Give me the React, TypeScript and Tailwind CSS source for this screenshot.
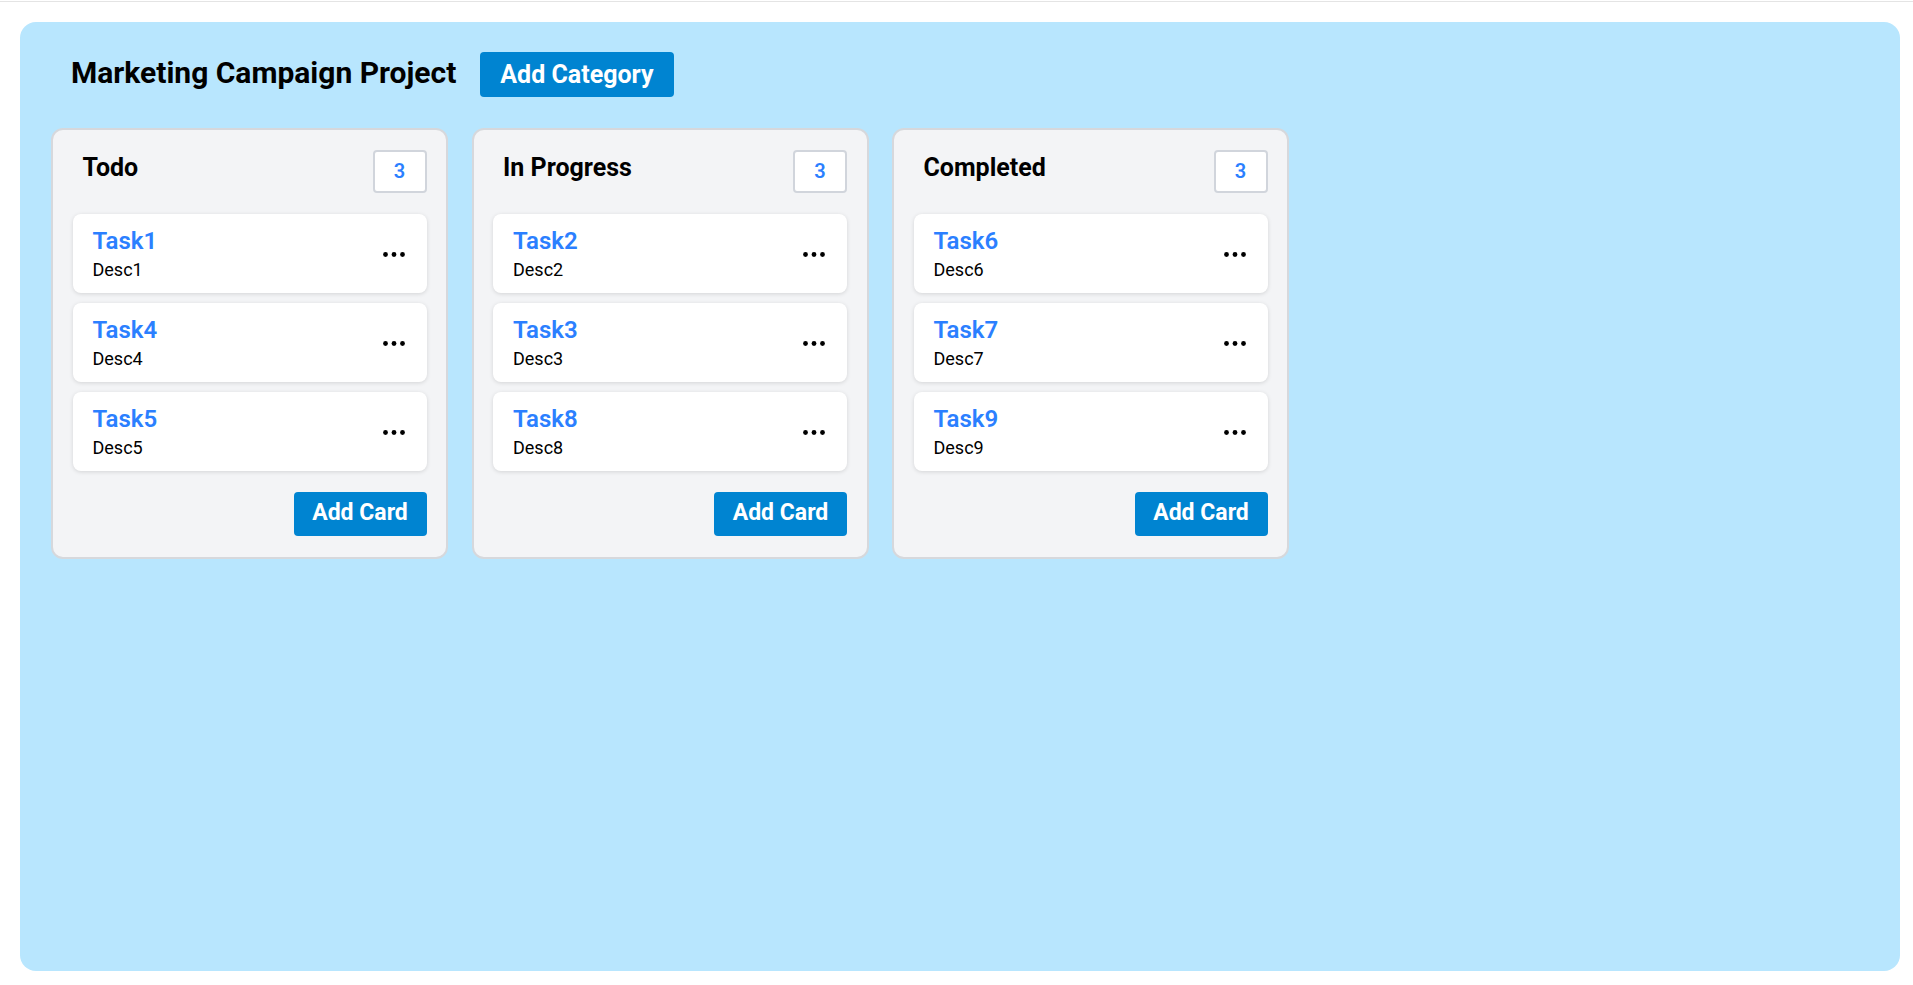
import React from "react";

type Task = { title: string; desc: string };
type Category = { name: string; tasks: Task[] };

const categories: Category[] = [
  {
    name: "Todo",
    tasks: [
      { title: "Task1", desc: "Desc1" },
      { title: "Task4", desc: "Desc4" },
      { title: "Task5", desc: "Desc5" },
    ],
  },
  {
    name: "In Progress",
    tasks: [
      { title: "Task2", desc: "Desc2" },
      { title: "Task3", desc: "Desc3" },
      { title: "Task8", desc: "Desc8" },
    ],
  },
  {
    name: "Completed",
    tasks: [
      { title: "Task6", desc: "Desc6" },
      { title: "Task7", desc: "Desc7" },
      { title: "Task9", desc: "Desc9" },
    ],
  },
];

function Dots() {
  return (
    <svg width="22" height="5" viewBox="0 0 22 5" className="shrink-0 mt-[2px]">
      <circle cx="2.5" cy="2.5" r="2.4" fill="#000" />
      <circle cx="11" cy="2.5" r="2.4" fill="#000" />
      <circle cx="19.5" cy="2.5" r="2.4" fill="#000" />
    </svg>
  );
}

function Card({ task }: { task: Task }) {
  return (
    <div className="flex items-center justify-between bg-white rounded-lg shadow-[0_1px_4px_rgba(0,0,0,0.13)] pl-5 pr-[22px] pt-[11px] pb-[11px]">
      <div className="flex flex-col">
        <div className="text-2xl leading-8 font-semibold text-blue-500">{task.title}</div>
        <div className="mt-[1px] text-[18px] leading-6 text-black">{task.desc}</div>
      </div>
      <Dots />
    </div>
  );
}

function Column({ cat }: { cat: Category }) {
  return (
    <div className="w-[397px] shrink-0 bg-gray-100 border-2 border-[#d6d8dc] rounded-xl px-[19.5px] pt-[19.5px] pb-[21px] flex flex-col">
      <div className="flex items-start justify-between">
        <div className="ml-[10px] pt-[2px] text-[25px] leading-8 font-bold text-black">{cat.name}</div>
        <div className="w-[54px] h-[43px] flex items-center justify-center bg-white border-2 border-gray-300 rounded text-xl font-semibold text-blue-500">
          {cat.tasks.length}
        </div>
      </div>
      <div className="mt-[21px] flex flex-col gap-[10px]">
        {cat.tasks.map((t) => (
          <Card key={t.title} task={t} />
        ))}
      </div>
      <div className="mt-[21px] flex justify-end">
        <button className="h-[44px] w-[133px] bg-sky-600 text-white text-[23px] font-bold rounded">
          Add Card
        </button>
      </div>
    </div>
  );
}

export default function App() {
  return (
    <div className="min-h-[985px] bg-white font-['Roboto',sans-serif]">
      <div className="h-[2px] border-b border-[#e4e4e4]" />
      <div className="ml-5 mr-[13px] mt-5 h-[949px] bg-sky-200 rounded-2xl pl-[31px] pt-[30px]">
        <div className="flex items-center gap-[24px]">
          <h1 className="ml-5 -mt-1 text-[30px] leading-9 font-bold text-black">
            Marketing Campaign Project
          </h1>
          <button className="h-[45px] px-[20px] bg-sky-600 text-white text-[25px] font-bold rounded">
            Add Category
          </button>
        </div>
        <div className="mt-[31px] flex items-start gap-[23.5px]">
          {categories.map((c) => (
            <Column key={c.name} cat={c} />
          ))}
        </div>
      </div>
    </div>
  );
}
